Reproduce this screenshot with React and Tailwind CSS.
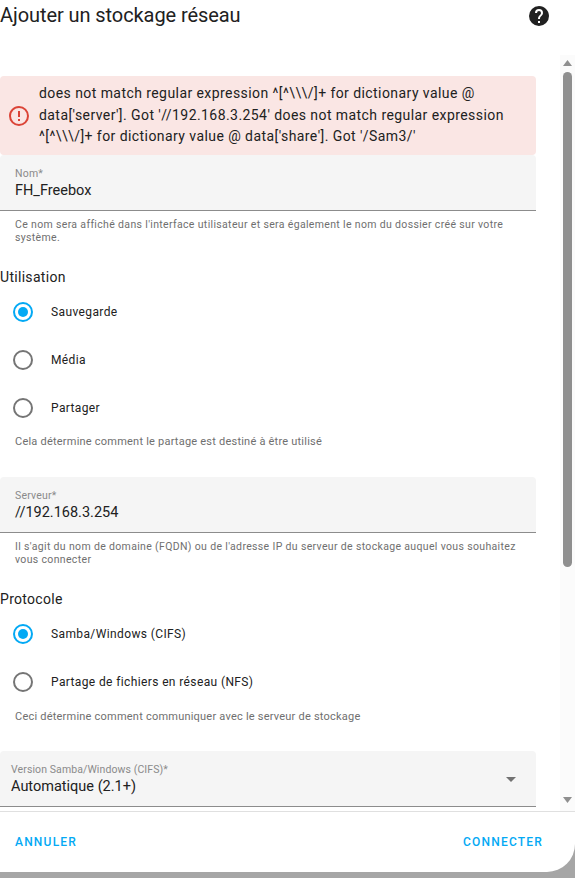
const font = { fontFamily: "Roboto, sans-serif" };

function Radio({ checked, label }) {
  return (
    <div className="flex items-center h-12 pl-[13px]">
      <span className={"w-5 h-5 rounded-full border-2 flex items-center justify-center shrink-0 " + (checked ? "border-[#03a9f4]" : "border-[#757575]")}>
        {checked && <span className="w-[10px] h-[10px] rounded-full bg-[#03a9f4]" />}
      </span>
      <span className="ml-[18px] text-[12px] tracking-[0.38px] text-[#212121]">{label}</span>
    </div>
  );
}

function Field({ label, value, helper, sel }) {
  return (
    <div>
      <div className={"relative bg-[#f5f5f5] rounded-t border-b border-[#8c8c8c] h-[56px] " + (sel ? "pl-[11px]" : "pl-[15px]")}>
        <div className={"pt-[12px] text-[10.5px] leading-[14px] text-[#8a8a8a] " + (sel ? "tracking-[0.1px]" : "tracking-[0.2px]")}>{label}</div>
        <div className="text-[14.5px] leading-[20px] text-[#212121]">{value}</div>
        {sel && (
          <svg className="absolute right-[20px] top-[26px]" width="10" height="5" viewBox="0 0 10 5"><path d="M0 0h10L5 5z" fill="#727272" /></svg>
        )}
      </div>
      {helper && <div className="pl-[15px] pr-[4px] pt-[7px] text-[10.5px] leading-[13px] tracking-[0.34px] text-[#6f6f6f]">{helper}</div>}
    </div>
  );
}

export default function App() {
  return (
    <div style={font} className="w-[575px] h-[878px] bg-[#a6a6a6] overflow-hidden">
      <div className="h-[872px] bg-white rounded-br-[28px] flex flex-col overflow-hidden">
        <header className="h-[52px] shrink-0 flex items-start justify-between">
          <h2 className="text-[20px] leading-[30px] tracking-[-0.08px] text-[#212121] font-normal">Ajouter un stockage réseau</h2>
          <svg className="mt-[4px] mr-[24px]" width="24" height="24" viewBox="0 0 24 24">
            <path fill="#212121" d="M15.07 11.25l-.9.92C13.45 12.89 13 13.5 13 15h-2v-.5c0-1.11.45-2.11 1.17-2.83l1.24-1.26c.37-.36.59-.86.59-1.41a2 2 0 0 0-2-2 2 2 0 0 0-2 2H8a4 4 0 0 1 4-4 4 4 0 0 1 4 4c0 .88-.36 1.67-.93 2.25M13 19h-2v-2h2M12 2A10 10 0 0 0 2 12a10 10 0 0 0 10 10 10 10 0 0 0 10-10c0-5.53-4.5-10-10-10z" />
          </svg>
        </header>
        <div className="flex-1 min-h-0 flex overflow-hidden">
          <div className="w-[536px] shrink-0 pt-[24px] overflow-hidden">
            <div className="h-[79px] bg-[#fae6e4] rounded flex items-center">
              <svg className="ml-[7px] shrink-0" width="24" height="24" viewBox="0 0 24 24">
                <path fill="#db4437" d="M11 15h2v2h-2zm0-8h2v6h-2zm1-5C6.47 2 2 6.5 2 12a10 10 0 0 0 10 10 10 10 0 0 0 10-10A10 10 0 0 0 12 2m0 18a8 8 0 0 1-8-8 8 8 0 0 1 8-8 8 8 0 0 1 8 8 8 8 0 0 1-8 8z" />
              </svg>
              <div className="ml-[8px] text-[14px] leading-[21.5px] tracking-[0.43px] text-[#212121] w-[480px]">
                does not match regular expression ^[^\\\/]+ for dictionary value @ data['server']. Got '//192.168.3.254' does not match regular expression ^[^\\\/]+ for dictionary value @ data['share']. Got '/Sam3/'
              </div>
            </div>
            <Field label="Nom*" value="FH_Freebox" helper="Ce nom sera affiché dans l'interface utilisateur et sera également le nom du dossier créé sur votre système." />
            <div className="mt-[23px] text-[14px] leading-[20px] tracking-[0.3px] text-[#212121]">Utilisation</div>
            <div className="mt-[1px]">
              <Radio checked label="Sauvegarde" />
              <Radio label="Média" />
              <Radio label="Partager" />
            </div>
            <div className="pl-[15px] pt-[3px] text-[11px] leading-[13px] tracking-[0.22px] text-[#6f6f6f]">Cela détermine comment le partage est destiné à être utilisé</div>
            <div className="mt-[29px]">
              <Field label="Serveur*" value="//192.168.3.254" helper="Il s'agit du nom de domaine (FQDN) ou de l'adresse IP du serveur de stockage auquel vous souhaitez vous connecter" />
            </div>
            <div className="mt-[23px] text-[14px] leading-[20px] tracking-[0.3px] text-[#212121]">Protocole</div>
            <div className="mt-[1px]">
              <Radio checked label="Samba/Windows (CIFS)" />
              <Radio label="Partage de fichiers en réseau (NFS)" />
            </div>
            <div className="pl-[15px] pt-[4px] text-[11px] leading-[13px] tracking-[0.22px] text-[#6f6f6f]">Ceci détermine comment communiquer avec le serveur de stockage</div>
            <div className="mt-[28px]">
              <Field sel label="Version Samba/Windows (CIFS)*" value="Automatique (2.1+)" />
            </div>
          </div>
          <div className="flex-1" />
          <div className="w-[15px] bg-[#fbfbfb] flex flex-col items-center mt-[3px]">
            <svg className="mt-[5px]" width="9" height="6" viewBox="0 0 9 6"><path d="M0 6h9L4.5 0z" fill="#8f8f8f" /></svg>
            <div className="w-[9px] h-[495px] mt-[6px] rounded-full bg-[#8f8f8f]" />
            <div className="flex-1" />
            <svg className="mb-[8px]" width="9" height="6" viewBox="0 0 9 6"><path d="M0 0h9L4.5 6z" fill="#8f8f8f" /></svg>
          </div>
        </div>
        <footer className="h-[61px] shrink-0 border-t border-[#e0e0e0] flex items-center justify-between pl-[15px] pr-[32px]">
          <span className="text-[12px] font-medium tracking-[1.2px] text-[#03a9f4]">ANNULER</span>
          <span className="text-[12px] font-medium tracking-[1.2px] text-[#03a9f4]">CONNECTER</span>
        </footer>
      </div>
    </div>
  );
}
